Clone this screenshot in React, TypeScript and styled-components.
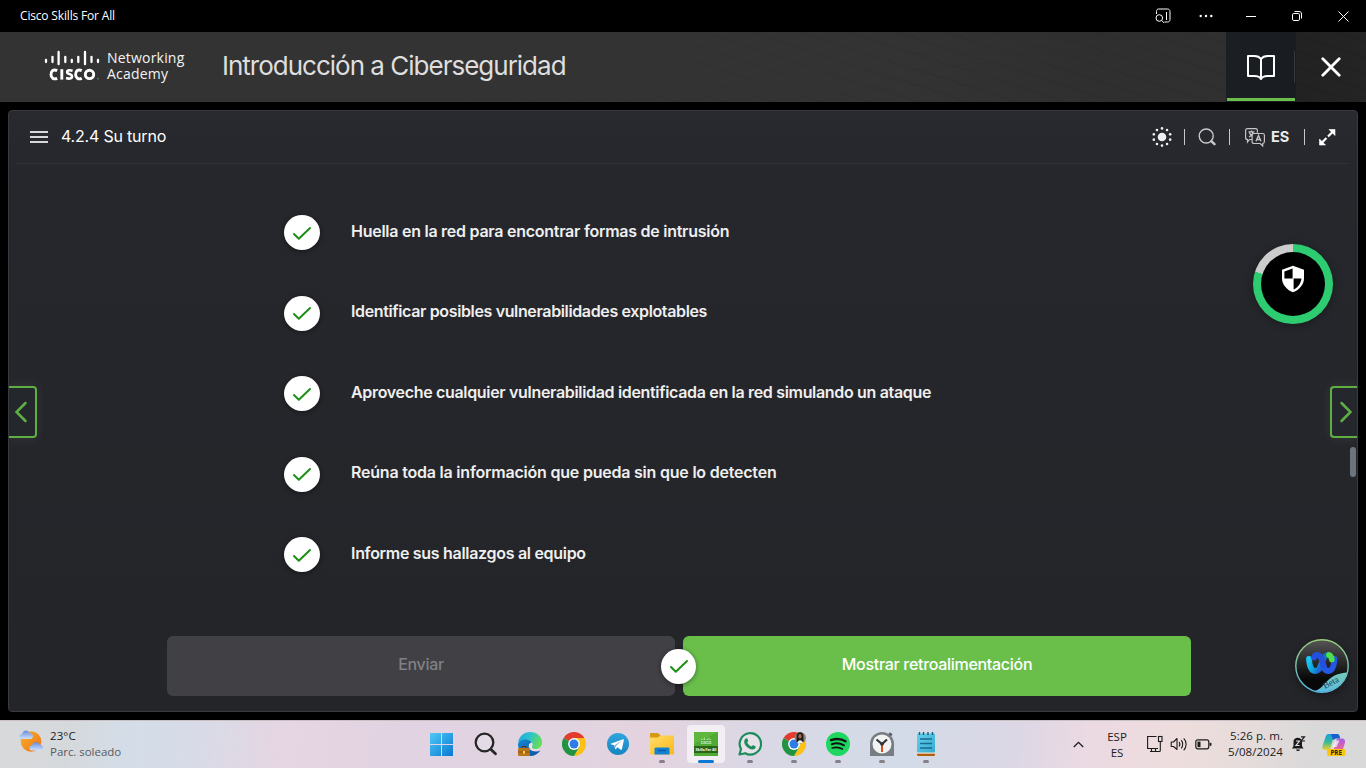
import React from "react";
import styled, { createGlobalStyle } from "styled-components";

const UI = `Inter, "Liberation Sans", sans-serif`;
const SYS = `"Open Sans", "Noto Sans", sans-serif`;

const Global = createGlobalStyle`
  * { box-sizing: border-box; }
  body { margin: 0; background: #000; overflow: hidden; }
  svg { display: block; flex: none; }
  button { font: inherit; color: inherit; background: none; border: 0; padding: 0; margin: 0; }
`;

const Screen = styled.div`
  width: 1366px;
  height: 768px;
  display: flex;
  flex-direction: column;
  background: #000;
  font-family: ${UI};
  overflow: hidden;
`;

const TitleBar = styled.div`
  height: 32px;
  flex: none;
  display: flex;
  align-items: center;
  padding-left: 20px;
  color: #fff;
  font: 12px/16px ${SYS};
`;
const WindowTitle = styled.span`
  flex: 1;
  letter-spacing: -0.17px;
`;
const WindowControls = styled.div`
  display: flex;
  height: 32px;
`;
const WindowControl = styled.button<{ $w: number }>`
  width: ${(p) => p.$w}px;
  display: flex;
  align-items: center;
  justify-content: center;
`;

const Header = styled.header`
  height: 70px;
  flex: none;
  display: flex;
  align-items: stretch;
  background:
    linear-gradient(90deg, #333 0, #333 420px, transparent 1000px),
    repeating-linear-gradient(18deg, transparent 0 13px, rgba(0, 0, 0, 0.05) 13px 15px),
    linear-gradient(90deg, #333 0, #333 900px, #2f2f2f 1100px, #303030 1226px, #222 1300px, #242424 1366px);
`;
const Brand = styled.div`
  width: 222px;
  display: flex;
  align-items: flex-start;
  padding: 18px 0 0 44px;
  color: #f4f4f4;
`;
const BrandName = styled.div`
  margin-left: 7px;
  font: 14px/16px "Open Sans", sans-serif;
  letter-spacing: 0.2px;
`;
const CourseTitle = styled.h1`
  flex: 1;
  margin: 0;
  font-size: 26px;
  line-height: 68px;
  font-weight: 400;
  letter-spacing: -1px;
  color: #dedede;
`;
const BookTab = styled.button`
  width: 70px;
  display: flex;
  align-items: center;
  justify-content: center;
  padding-top: 1px;
  background:
    linear-gradient(#35383c, #35383c) 68px 19px / 1px 32px no-repeat,
    linear-gradient(#6abf4b, #6abf4b) 1px 66px / 68px 3px no-repeat,
    linear-gradient(90deg, #1b1e23, #191c20);
`;
const CloseTab = styled.button`
  width: 70px;
  display: flex;
  align-items: center;
  justify-content: center;
`;

const Stage = styled.main`
  flex: 1;
  padding: 8px;
  display: flex;
`;
const Panel = styled.section`
  position: relative;
  flex: 1;
  display: flex;
  flex-direction: column;
  background: linear-gradient(180deg, #282a2f 0, #26272c 60px, #242529 100%);
  border: 1px solid #393a40;
  border-radius: 4px;
  overflow: hidden;
`;
const Toolbar = styled.div`
  height: 53px;
  flex: none;
  display: flex;
  align-items: center;
  margin: 0 8px 0 6px;
  padding: 0 12px 0 15px;
  border-bottom: 1px solid #313338;
  color: #fff;
`;
const Topic = styled.span`
  flex: 1;
  margin: -2px 0 0 13px;
  font-size: 16px;
  line-height: 20px;
  letter-spacing: -0.2px;
`;
const Tools = styled.div`
  display: flex;
  align-items: center;
`;
const Divider = styled.i<{ $l: number; $r: number }>`
  width: 1px;
  height: 16px;
  background: #c8c8ca;
  margin: 0 ${(p) => p.$r}px 0 ${(p) => p.$l}px;
`;
const Lang = styled.b`
  font-size: 14.5px;
  line-height: 18px;
  font-weight: 700;
  margin: 0 0 0 6px;
  width: 19px;
  color: #ececec;
`;

const Content = styled.div`
  flex: 1;
  padding: 28.4px 0 0 158px;
`;
const List = styled.ul`
  list-style: none;
  margin: 0;
  padding: 0 0 0 117px;
`;
const Item = styled.li`
  height: 80.5px;
  display: flex;
  align-items: center;
  color: #efefef;
`;
const Disc = styled.span<{ $w: number }>`
  width: ${(p) => p.$w}px;
  height: 35px;
  flex: none;
  border-radius: 50%;
  background: #fff;
  display: flex;
  align-items: center;
  justify-content: center;
  box-shadow: 0 1px 5px rgba(0, 0, 0, 0.45);
`;
const ItemText = styled.span<{ $ls: number }>`
  margin: -3.8px 0 0 31px;
  font-size: 16px;
  line-height: 24px;
  font-weight: 600;
  letter-spacing: ${(p) => p.$ls}px;
  white-space: nowrap;
`;
const Actions = styled.div`
  position: relative;
  display: flex;
  gap: 8px;
  margin-top: 41.1px;
`;
const Action = styled.button<{ $primary?: boolean }>`
  width: 508px;
  height: 60px;
  padding-bottom: 3px;
  border-radius: 6px;
  background: ${(p) => (p.$primary ? "#6abf4b" : "#414145")};
  color: ${(p) => (p.$primary ? "#fff" : "#7f8083")};
  font-size: 16px;
  font-weight: 500;
  letter-spacing: -0.3px;
`;
const ActionBadge = styled.div`
  position: absolute;
  left: 494px;
  top: 13px;
`;

const SideNav = styled.button<{ $side: "left" | "right" }>`
  position: absolute;
  top: 275px;
  ${(p) => p.$side}: ${(p) => (p.$side === "left" ? -1 : -2)}px;
  width: 29px;
  height: 52px;
  display: flex;
  align-items: center;
  justify-content: center;
  ${(p) => (p.$side === "left" ? "padding-right: 1px;" : "padding-left: 1px;")}
  background: #24282d;
  border: 2px solid #5fae43;
  border-${(p) => p.$side}: 0;
  border-radius: ${(p) => (p.$side === "left" ? "0 4px 4px 0" : "4px 0 0 4px")};
  box-shadow: 0 0 12px rgba(255, 255, 255, 0.08);
`;
const ScrollThumb = styled.div`
  position: absolute;
  right: 1px;
  top: 336px;
  width: 6px;
  height: 30px;
  border-radius: 3px;
  background: #6c757e;
`;
const ProgressDial = styled.div`
  position: absolute;
  right: 24px;
  top: 133px;
  width: 80px;
  height: 80px;
  border-radius: 50%;
  padding: 8px;
  background: conic-gradient(#2ecc71 0 80%, #ccc 80% 100%);
  box-shadow: 0 2px 8px rgba(0, 0, 0, 0.3);
`;
const DialFace = styled.div`
  height: 64px;
  border-radius: 50%;
  background: #000;
  display: flex;
  justify-content: center;
  padding-top: 13px;
`;
const Assistant = styled.div`
  position: absolute;
  right: 8px;
  bottom: 18px;
  border-radius: 50%;
  box-shadow: 0 3px 8px rgba(0, 0, 0, 0.35);
`;

const Taskbar = styled.footer`
  height: 48px;
  flex: none;
  display: flex;
  border-top: 1px solid #c9c0c6;
  font-family: ${SYS};
  background: linear-gradient(97deg, #d8d9da 0, #d6d9dc 70px, #d3dde8 130px, #d8dbe7 200px, #e6d5e2 285px, #e2d3e2 400px, #e0d4e0 560px, #e4d3df 640px, #dad8e5 760px, #d3dbe8 900px, #dcd7e5 1010px, #ebd9e3 1080px, #eedddd 1170px, #e6dcdb 1240px, #d9d9d9 1310px, #d9d9d9 100%);
`;
const Weather = styled.div`
  width: 420px;
  display: flex;
  padding: 7px 0 0 18px;
`;
const WeatherText = styled.div`
  margin-left: 6px;
  font-size: 11.5px;
  line-height: 16px;
  letter-spacing: 0.1px;
  color: #1b1b1b;
`;
const Muted = styled.div`
  color: #595a5d;
  letter-spacing: -0.04px;
`;
const Apps = styled.div`
  flex: 1;
  display: flex;
`;
const AppSlot = styled.div<{ $active?: boolean; $running?: boolean }>`
  width: 38px;
  height: 38px;
  margin: 4px 3px 0;
  border-radius: 4px;
  display: flex;
  flex-direction: column;
  align-items: center;
  padding-top: 7px;
  background: ${(p) => (p.$active ? "rgba(255,255,255,.6)" : "none")};
  &::after {
    content: "";
    display: ${(p) => (p.$running ? "block" : "none")};
    width: ${(p) => (p.$active ? 16 : 6)}px;
    height: 3px;
    margin-top: 4px;
    border-radius: 2px;
    background: ${(p) => (p.$active ? "#0a78d4" : "#858088")};
  }
`;
const Tray = styled.div`
  display: flex;
  width: 300px;
  padding-top: 7px;
  color: #1b1b1b;
  font-size: 11.5px;
  line-height: 16px;
`;
const TrayIcon = styled.div<{ $ml: number; $mt: number }>`
  margin: ${(p) => p.$mt}px 0 0 ${(p) => p.$ml}px;
`;
const Keyboard = styled.div`
  width: 30px;
  margin-left: 18px;
  margin-right: -1px;
  margin-top: 1px;
  text-align: center;
`;
const Clock = styled.div`
  width: 66px;
  margin-left: 5px;
  text-align: right;
  white-space: nowrap;
  letter-spacing: 0.05px;
`;

const Check = () => (
  <svg width="20" height="16" viewBox="0 0 20 16" fill="none" stroke="#1d9016" strokeWidth="2" strokeLinecap="round" strokeLinejoin="round">
    <path d="M2 9 6.800 13.800 18 3" />
  </svg>
);

const CiscoLogo = () => (
  <svg width="56" height="33" viewBox="0 0 56 33">
    <g stroke="#fff" strokeWidth="2.3" strokeLinecap="round">
      <path d="M2 9.8V12M8.5 6.8V12M14.6 2V14.2M21.3 6.8V12M27.8 9.8V12M34.3 6.8V12M41 2V14.2M47.5 6.8V12M54 9.8V12" />
    </g>
    <g fill="none" stroke="#fff" strokeWidth="2.9">
      <path d="M13.2 20.6C9.5 18.8 7 21 7 24.4S9.6 29.9 13.2 28.3" />
      <path d="M17.8 19.2V29.6" />
      <path d="M28.6 20.7C25.2 19.8 23.1 20.3 23.1 21.9 23.1 24.7 28 23.3 28 26.5 28 28.8 25 29 22 28.1" strokeWidth="2.6" />
      <path d="M37.8 20.6C34.1 18.8 31.6 21 31.6 24.4S34.2 29.9 37.8 28.3" />
      <circle cx="45.5" cy="24.4" r="4.2" />
    </g>
    <circle cx="54" cy="28.8" r=".7" fill="#999" />
  </svg>
);

const Chevron = ({ dir }: { dir: "left" | "right" }) => (
  <svg width="14" height="22" viewBox="0 0 14 22" fill="none" stroke="#5fae43" strokeWidth="2.5" strokeLinecap="round">
    <path d={dir === "left" ? "M11.5 2 2.5 11l9 9" : "M2.5 2l9 9-9 9"} />
  </svg>
);

const ShieldIcon = () => (
  <svg width="24" height="28" viewBox="0 0 24 28">
    <path d="M12 .8 1 4.8v8.4c0 6 4.4 11.6 11 14 6.6-2.4 11-8 11-14V4.8z" fill="#fff" />
    <path d="M11.6 3.5 3.4 6.4v7h8.2zM12.6 13.4V24.5c4.3-2 7.3-6.2 7.9-11.1z" fill="#000" />
  </svg>
);

const AssistantIcon = () => (
  <svg width="54" height="54" viewBox="0 0 54 54">
    <defs>
      <linearGradient id="as-bg" x1="0" y1="0" x2="0" y2="1"><stop stopColor="#555" /><stop offset=".75" stopColor="#080808" /></linearGradient>
      <linearGradient id="as-ring" x1="0" y1="0" x2="0" y2="1"><stop stopColor="#9bd07c" /><stop offset="1" stopColor="#55b9e4" /></linearGradient>
      <linearGradient id="as-rib" x1="1" y1="0" x2="0" y2="1"><stop stopColor="#76ccb4" /><stop offset="1" stopColor="#57b8e6" /></linearGradient>
      <linearGradient id="as-l" x1="0" y1="0" x2="1" y2=".4"><stop stopColor="#19c8f4" /><stop offset=".5" stopColor="#0fa5d8" /><stop offset="1" stopColor="#2060d8" /></linearGradient>
      <clipPath id="as-clip"><circle cx="27" cy="27" r="26" /></clipPath>
    </defs>
    <circle cx="27" cy="27" r="26" fill="url(#as-bg)" />
    <g fill="none" strokeLinecap="round" strokeWidth="5.8">
      <path d="M39.5 20C39 27 37 32 33 32S28.500 27 27 21.500" stroke="#2457e6" />
      <path d="M14 20C14.500 27.500 16.500 32 20.500 32S25.500 27.500 27.500 21.500" stroke="url(#as-l)" />
      <path d="M27.500 21.500C29 17 31 15.800 33.500 15.800" stroke="#1672b4" />
      <path d="M34 16C36 16.500 36.500 18.500 36.800 20.500" stroke="#4be04a" />
      <path d="M19 18.500C20 15 24.500 14.500 26.500 20L28.500 26.500" stroke="#2450dd" />
    </g>
    <path d="M20 52C31 49 31 34 54 33.500V54H20z" fill="url(#as-rib)" clipPath="url(#as-clip)" />
    <circle cx="27" cy="27" r="26.2" fill="none" stroke="url(#as-ring)" strokeWidth="1.4" />
    <text x="30" y="50" transform="rotate(-28 30 50)" fontFamily="Liberation Serif, serif" fontSize="9" fill="#1c4258">Beta</text>
  </svg>
);

const WeatherIcon = () => (
  <svg width="26" height="26" viewBox="0 0 26 26">
    <defs>
      <linearGradient id="sun" x1="0" y1="0" x2="1" y2="1"><stop stopColor="#f7b22b" /><stop offset="1" stopColor="#ef7216" /></linearGradient>
      <linearGradient id="cl" x1="0" y1="0" x2="0" y2="1"><stop stopColor="#6288e0" /><stop offset="1" stopColor="#cfe1f9" /></linearGradient>
    </defs>
    <circle cx="13" cy="13.5" r="10.3" fill="url(#sun)" />
    <path d="M4 11C.5 11 .5 6.500 4 6.200 5 1.200 10.500 1.500 11.300 5 16 5 16 11 12.500 11z" fill="url(#cl)" />
    <path d="M14 22.500C10.500 22.500 10.500 17.800 14 17.500 15 12.700 20.500 13 21.300 16.500 26 16.500 26 22.500 22.500 22.500z" fill="url(#cl)" />
  </svg>
);

const WindowsIcon = () => (
  <svg width="24" height="24" viewBox="0 0 24 24">
    <defs><linearGradient id="win" x1="0" y1="0" x2="1" y2="1"><stop stopColor="#4fc9f8" /><stop offset="1" stopColor="#0a78d2" /></linearGradient></defs>
    <path d="M0 1h11v11H0zM12 1h11v11H12zM0 13h11v11H0zM12 13h11v11H12z" fill="url(#win)" />
  </svg>
);
const SearchAppIcon = () => (
  <svg width="24" height="24" viewBox="0 0 24 24">
    <circle cx="10.5" cy="10.5" r="8.8" fill="#e3dce6" stroke="#262626" strokeWidth="2.3" />
    <path d="m17 17.5 4.5 4.3" stroke="#262626" strokeWidth="2.8" strokeLinecap="round" />
  </svg>
);
const EdgeIcon = () => (
  <svg width="24" height="24" viewBox="0 0 24 24">
    <defs>
      <linearGradient id="ed1" x1="0" y1="0" x2="1" y2=".4"><stop stopColor="#1ba4e2" /><stop offset=".5" stopColor="#2cc3cd" /><stop offset="1" stopColor="#63dc5d" /></linearGradient>
      <linearGradient id="ed2" x1="0" y1="0" x2="1" y2="1"><stop stopColor="#1389d6" /><stop offset="1" stopColor="#0d4f9e" /></linearGradient>
    </defs>
    <path d="M0 11C1 4 6 0 12 0c7 0 12 4.500 12 10.500 0 4-3 6.500-6.500 6.500-3 0-4-1.200-3.500-2.500C16 11 13 8 9 8S1.500 9 0 11z" fill="url(#ed1)" />
    <path d="M0 12C1 8.500 5 7 8.500 7.500c3 .3 5 2 5.300 3.500-3 .5-3.800 3.500-1.800 6 2.500 3 7 3 10.500 1.500C20 22 16.500 24 12 24 5 24 0 19 0 12z" fill="url(#ed2)" />
    <path d="M13.500 10.500c-3 1-3.500 4-1.500 6.500 2 2 6 2.500 9 .3-3 .7-8 .2-7-2.800.6-1.500.5-3-.5-4z" fill="#e9e0ec" />
    <rect x="0" y="16" width="12" height="8" rx="1" fill="#b9761a" /><path d="M4 16v-1.500h4V16" stroke="#613606" fill="none" /><path d="M0 20h12" stroke="#845010" /><rect x="5" y="19" width="2" height="2.5" fill="#ffd04c" />
  </svg>
);
const ChromeIcon = ({ profile }: { profile?: boolean }) => (
  <svg width="24" height="24" viewBox="0 0 24 24">
    <path d="M12 12 1.600 6A12 12 0 0 1 22.400 6z" fill="#e33b2e" />
    <path d="M12 12V24A12 12 0 0 1 1.600 6z" fill="#229342" />
    <path d="M12 6h10.400A12 12 0 0 1 12 24l5.200-9z" fill="#fbc116" />
    <path d="M12 24l5.200-9H8z" fill="#229342" />
    <circle cx="12" cy="12" r="5.9" fill="#fff" /><circle cx="12" cy="12" r="4.5" fill="#2e7bea" />
    {profile && (
      <g>
        <circle cx="18.3" cy="5.8" r="5.7" fill="#8f8781" />
        <path d="M14.500 10V4c0-5 7-5 7 0v6z" fill="#241a18" />
        <ellipse cx="18" cy="4.3" rx="1.6" ry="2.2" fill="#9c6b55" />
        <path d="M15.500 11.300c0-4 5-4 5.300-.4z" fill="#eee" />
      </g>
    )}
  </svg>
);
const TelegramIcon = () => (
  <svg width="24" height="24" viewBox="0 0 24 24">
    <defs><linearGradient id="tg" x1="0" y1="0" x2="0" y2="1"><stop stopColor="#32a5de" /><stop offset="1" stopColor="#1586bf" /></linearGradient></defs>
    <circle cx="12" cy="12" r="11" fill="url(#tg)" />
    <path d="M4.800 11.800 17 7.200c.7-.2 1 .1.900.8l-2 9.200c-.2.7-.7.8-1.200.5L11.500 15.300 9.900 17c-.6.5-.8.200-.9-.4l-.8-3.300-3.300-1c-.5-.2-.5-.4-.1-.5z" fill="#fff" />
    <path d="m8.500 13.300 6.800-4.600-5.300 5.300-.4 2.600z" fill="#7fb9dc" />
  </svg>
);
const FolderIcon = () => (
  <svg width="24" height="24" viewBox="0 0 24 24">
    <defs><linearGradient id="fo" x1="0" y1="0" x2="1" y2="1"><stop stopColor="#ffdc6b" /><stop offset="1" stopColor="#fab918" /></linearGradient></defs>
    <path d="M0 2c0-.7.500-1 1-1h7l2.500 2.500V8H0z" fill="#d49a10" />
    <path d="M0 5.500h8L10.500 3.500H23.500c.3 0 .5.200.5.500V21.500c0 .6-.4 1-1 1H1c-.6 0-1-.4-1-1z" fill="url(#fo)" />
    <path d="M4.500 22.500v-5.500c0-1 .5-1.500 1.500-1.500h12c1 0 1.500.5 1.500 1.500v5.500z" fill="#1482d2" /><path d="M8 18.500h8" stroke="#0a5ba8" strokeWidth="1.5" />
  </svg>
);
const SkillsIcon = () => (
  <svg width="24" height="24" viewBox="0 0 24 24">
    <rect width="24" height="24" fill="#50a933" /><path d="M0 0h24L0 12z" fill="#5fb83d" />
    <path d="M7.500 7v1M9 6.500V8M10.500 5.500V8M12 7v1M13.500 6.500V8M15 5.500V8M16.500 7v1" stroke="#cfeec3" strokeWidth=".7" />
    <text x="12" y="12" textAnchor="middle" fontFamily="Inter, sans-serif" fontWeight="700" fontSize="3.3" fill="#dff2d7">CISCO</text>
    <rect y="14" width="24" height="7" fill="#276716" />
    <text x="12" y="18.8" textAnchor="middle" fontFamily="Inter, sans-serif" fontWeight="700" fontSize="3.5" fill="#fff">Skills For All</text>
  </svg>
);
const WhatsIcon = () => (
  <svg width="24" height="24" viewBox="0 0 24 24">
    <path d="M1.500 22.500 3 17A10.700 10.700 0 1 1 7.200 21.200z" fill="#e7e1ea" stroke="#1d8c5b" strokeWidth="2.2" strokeLinejoin="round" />
    <path d="M8.200 6.300c.6-.2 1 0 1.200.5l.8 1.900c.1.400 0 .7-1 1.700.9 1.900 2.300 3.200 4.400 4.100 1-1.200 1.200-1.500 1.700-1.300l2 1c.5.200.6.500.4 1.100-.5 1.600-2 2.400-3.500 2.200-4.200-.7-7.500-4-8-7.300-.1-1.700.8-3.300 2-3.900z" fill="#1d8c5b" />
  </svg>
);
const SpotifyIcon = () => (
  <svg width="24" height="24" viewBox="0 0 24 24">
    <circle cx="12" cy="12" r="12" fill="#1ed760" />
    <g fill="none" stroke="#10140f" strokeLinecap="round"><path d="M5 8.200C10 6.500 16 7 19.500 9.300" strokeWidth="2.3" /><path d="M5.800 12.200C10 10.800 14.500 11.300 18 13.300" strokeWidth="2" /><path d="M6.300 16C10 14.900 13.500 15.300 16.500 17" strokeWidth="1.6" /></g>
  </svg>
);
const ClockIcon = () => (
  <svg width="24" height="24" viewBox="0 0 24 24">
    <path d="M18 2.500 20 .3l2.500 2L21 4.500z" fill="#575c60" /><path d="M0 24V12a12 12 0 0 1 24 0v12z" fill="#777d83" />
    <circle cx="12" cy="12" r="9.5" fill="#f3f3f3" /><path d="M6.500 7.500 12 12l5-4.500" stroke="#303438" strokeWidth="2.2" fill="none" /><path d="M12 12v8" stroke="#d8511c" strokeWidth="2" /><circle cx="12" cy="12" r="1.8" fill="#303438" />
  </svg>
);
const NotepadIcon = () => (
  <svg width="24" height="24" viewBox="0 0 24 24">
    <defs><linearGradient id="np" x1="0" y1="0" x2="1" y2="1"><stop stopColor="#65d1ea" /><stop offset="1" stopColor="#37abd0" /></linearGradient></defs>
    <path d="M3 21h18v1.500c0 .8-.5 1.500-1.500 1.500h-15C3.500 24 3 23.300 3 22.500z" fill="#b65a0c" /><rect x="3" y="20" width="18" height="1.7" fill="#eee6d8" />
    <rect x="3" y="1.5" width="18" height="19" rx="1" fill="url(#np)" />
    <path d="M5.500 0v3M9.500 0v3M14 0v3M18.500 0v3" stroke="#175a80" strokeWidth="1.4" /><path d="M6 7h12M6 11.500h12M6 16h12" stroke="#1a6a93" strokeWidth="1.5" />
  </svg>
);

const TASKS: { icon: React.ReactNode; running?: boolean; active?: boolean }[] = [
  { icon: <WindowsIcon /> },
  { icon: <SearchAppIcon /> },
  { icon: <EdgeIcon /> },
  { icon: <ChromeIcon /> },
  { icon: <TelegramIcon /> },
  { icon: <FolderIcon />, running: true },
  { icon: <SkillsIcon />, running: true, active: true },
  { icon: <WhatsIcon />, running: true },
  { icon: <ChromeIcon profile />, running: true },
  { icon: <SpotifyIcon />, running: true },
  { icon: <ClockIcon />, running: true },
  { icon: <NotepadIcon />, running: true },
];

const STEPS = [
  { text: "Huella en la red para encontrar formas de intrusión", ls: -0.26 },
  { text: "Identificar posibles vulnerabilidades explotables", ls: -0.36 },
  { text: "Aproveche cualquier vulnerabilidad identificada en la red simulando un ataque", ls: -0.325 },
  { text: "Reúna toda la información que pueda sin que lo detecten", ls: -0.215 },
  { text: "Informe sus hallazgos al equipo", ls: -0.3 },
];

const SunIcon = () => (
  <svg width="20" height="20" viewBox="0 0 20 20" fill="#efefef">
    <circle cx="10" cy="10" r="4.3" />
    {Array.from({ length: 10 }, (_, i) => {
      const a = (i * Math.PI) / 5 - Math.PI / 2;
      return <circle key={i} cx={10 + 8.6 * Math.cos(a)} cy={10 + 8.6 * Math.sin(a)} r="1.3" />;
    })}
  </svg>
);

export default function App() {
  return (
    <Screen>
      <Global />
      <TitleBar>
        <WindowTitle>Cisco Skills For All</WindowTitle>
        <WindowControls>
          <WindowControl $w={40}>
            <svg width="16" height="16" viewBox="0 0 16 16" fill="none" stroke="#fff">
              <path d="M1.500 6V3.500c0-1.500.8-2.500 2-2.500h9c1.500 0 2.500 1 2.500 2.500v8c0 1.500-1 2.500-2.500 2.500H9.500M11.500 4v8" /><circle cx="4.3" cy="10" r="3.3" /><path d="m6.700 12.500 2.500 2.500" />
            </svg>
          </WindowControl>
          <WindowControl $w={45}>
            <svg width="14" height="4" viewBox="0 0 14 4" fill="#fff"><circle cx="1.7" cy="2" r="1.2" /><circle cx="7" cy="2" r="1.2" /><circle cx="12.3" cy="2" r="1.2" /></svg>
          </WindowControl>
          <WindowControl $w={45}><svg width="10" height="10"><path d="M0 5.500h10" stroke="#fff" /></svg></WindowControl>
          <WindowControl $w={47}>
            <svg width="10" height="10" viewBox="0 0 10 10" fill="none" stroke="#fff"><rect x=".5" y="2.5" width="7" height="7" rx="1.3" /><path d="M2.500.5H7C8.700.5 9.500 1.300 9.500 3v4.500" /></svg>
          </WindowControl>
          <WindowControl $w={46}><svg width="11" height="11" viewBox="0 0 11 11" stroke="#fff"><path d="m.5.5 10 10M10.500.5l-10 10" /></svg></WindowControl>
        </WindowControls>
      </TitleBar>

      <Header>
        <Brand>
          <CiscoLogo />
          <BrandName>Networking<br />Academy</BrandName>
        </Brand>
        <CourseTitle>Introducción a Ciberseguridad</CourseTitle>
        <BookTab>
          <svg width="30" height="28" viewBox="0 0 30 28" fill="none" stroke="#fff" strokeWidth="2">
            <path d="M15 5C13.500 3 11.500 2 8.500 2H2v20h6.500c3.500 0 5.500 1 6.500 3 1-2 3-3 6.500-3H28V2h-6.500c-3 0-5 1-6.500 3zM15 5v20.500" strokeLinejoin="round" />
          </svg>
        </BookTab>
        <CloseTab>
          <svg width="20" height="20" viewBox="0 0 20 20" stroke="#fff" strokeWidth="2.8" strokeLinecap="round"><path d="m1.800 1.800 16.400 16.400M18.200 1.800 1.800 18.200" /></svg>
        </CloseTab>
      </Header>

      <Stage>
        <Panel>
          <Toolbar>
            <svg width="18" height="12" viewBox="0 0 18 12" stroke="#d8d8da" strokeWidth="2"><path d="M0 1h18M0 6h18M0 11h18" /></svg>
            <Topic>4.2.4 Su turno</Topic>
            <Tools>
              <SunIcon />
              <Divider $l={12} $r={13} />
              <svg width="18" height="18" viewBox="0 0 18 18" fill="none" stroke="#c9c9cb"><circle cx="8.2" cy="8" r="7" strokeWidth="1.4" /><path d="m13.300 13.200 3.200 3" strokeWidth="2.4" strokeLinecap="round" /></svg>
              <Divider $l={13} $r={15} />
              <svg width="20" height="19" viewBox="0 0 20 19" fill="none" stroke="#c4c4c6" strokeWidth="1.2">
                <path d="M7 11.500H4.500L2.500 14v-2.500C1 11.500.6 11 .6 9.500V2.500C.6 1.200 1.200.7 2.500.7h8c1.300 0 1.900.5 1.900 1.800v2.300" />
                <path d="M9 5.500h8.500c1.300 0 1.900.6 1.900 1.800v6.200c0 1.300-.4 1.900-1.700 2V18l-2.500-2.500H9c-1.300 0-1.900-.6-1.900-1.900V7.300c0-1.200.6-1.800 1.900-1.800z" />
                <path d="M3.500 3.800h6M6.500 2.500v1.300M4 9C6 8 7.600 6.300 8 4M4.500 4.500C5 6.200 5.800 7.300 7 8.300M11 13.300l2.500-5.800 2.500 5.800M11.800 11.500h3.400" strokeWidth="1.3" />
              </svg>
              <Lang>ES</Lang>
              <Divider $l={14} $r={13} />
              <svg width="19" height="19" viewBox="0 0 19 19" fill="#fff" stroke="#fff"><path d="m4 14.500 4.500-4.500M10 8.500 14.500 4" strokeWidth="2.2" /><path d="M17 1.500v6l-6-6zM1.500 17v-6l6 6z" strokeWidth=".6" /></svg>
            </Tools>
          </Toolbar>

          <Content>
            <List>
              {STEPS.map((s) => (
                <Item key={s.text}>
                  <Disc $w={36}><Check /></Disc>
                  <ItemText $ls={s.ls}>{s.text}</ItemText>
                </Item>
              ))}
            </List>
            <Actions>
              <Action>Enviar</Action>
              <Action $primary>Mostrar retroalimentación</Action>
              <ActionBadge><Disc $w={35}><Check /></Disc></ActionBadge>
            </Actions>
          </Content>

          <SideNav $side="left"><Chevron dir="left" /></SideNav>
          <SideNav $side="right"><Chevron dir="right" /></SideNav>
          <ScrollThumb />
          <ProgressDial><DialFace><ShieldIcon /></DialFace></ProgressDial>
          <Assistant><AssistantIcon /></Assistant>
        </Panel>
      </Stage>

      <Taskbar>
        <Weather>
          <WeatherIcon />
          <WeatherText>23°C<Muted>Parc. soleado</Muted></WeatherText>
        </Weather>
        <Apps>
          {TASKS.map((t, i) => (
            <AppSlot key={i} $active={t.active} $running={t.running}>{t.icon}</AppSlot>
          ))}
        </Apps>
        <Tray>
          <TrayIcon $ml={7} $mt={13}>
            <svg width="11" height="7" viewBox="0 0 11 7" fill="none" stroke="#1b1b1b" strokeWidth="1.3"><path d="m.8 6 4.700-4.700L10.200 6" /></svg>
          </TrayIcon>
          <Keyboard>ESP<br />ES</Keyboard>
          <TrayIcon $ml={15} $mt={7}>
            <svg width="17" height="18" viewBox="0 0 17 18" fill="none" stroke="#1b1b1b" strokeWidth="1.1"><path d="M10.500 1.500H1.600v12h10.400M5.500 13.500v3M9.500 13.500v3M4 16.500h9.500c.6 0 .8-.4.8-1V6.500" /><rect x="12.5" y="1.5" width="3.5" height="5" /></svg>
          </TrayIcon>
          <TrayIcon $ml={7} $mt={8}>
            <svg width="18" height="16" viewBox="0 0 18 16" fill="none" stroke="#1b1b1b" strokeWidth="1.1" strokeLinejoin="round"><path d="M1.200 6v4.500h2.300L7 13.500v-11L3.500 6zM9 6c1 1.200 1 3.200 0 4.500M11.200 4.200c2 2.200 2 6 0 8.200M13.700 2.300c3.200 3 3.200 9 0 12" /></svg>
          </TrayIcon>
          <TrayIcon $ml={7} $mt={11}>
            <svg width="17" height="11" viewBox="0 0 17 11" fill="none" stroke="#1b1b1b" strokeWidth="1.2"><rect x=".8" y=".8" width="13" height="9" rx="2" /><path d="M15.500 3.800v3" strokeWidth="1.8" /><rect x="2.5" y="2.6" width="3" height="5.5" fill="#1b1b1b" stroke="none" /></svg>
          </TrayIcon>
          <Clock>5:26 p. m.<br />5/08/2024</Clock>
          <TrayIcon $ml={8} $mt={8}>
            <svg width="15" height="16" viewBox="0 0 15 16"><path d="M1 12.500 2.500 10V5.500C2.500.5 11 .5 11 5.500V10l1.500 2.500zM5 13.500h4c-.5 2-3.500 2-4 0z" fill="#1b1b1b" /><path d="M5 5h3.500L5 9.500h3.500" stroke="#e8dedd" fill="none" strokeWidth="1.2" /><path d="M10 .8h3.500L10.200 5H14" stroke="#1b1b1b" fill="none" strokeWidth="1.2" /></svg>
          </TrayIcon>
          <TrayIcon $ml={16} $mt={5}>
            <svg width="25" height="24" viewBox="0 0 25 24">
              <defs>
                <linearGradient id="co1" x1="0" y1="0" x2="0" y2="1"><stop stopColor="#169fdf" /><stop offset=".5" stopColor="#37b99a" /><stop offset="1" stopColor="#f2cf27" /></linearGradient>
                <linearGradient id="co2" x1="0" y1="0" x2="0" y2="1"><stop stopColor="#a45fe8" /><stop offset="1" stopColor="#f0678f" /></linearGradient>
              </defs>
              <path d="M7 1h8c2 0 2.500 1.500 3 4h-4c-2 0-3 1-3.500 3L8.500 15c-.4 1.500-1.300 2-3 2H3c-2 0-3-1.500-2.500-4L3.500 4C4 2 5 1 7 1z" fill="url(#co1)" />
              <path d="M9 1h6c2 0 2.500 1.500 3 4.500h-4L11 7z" fill="#1a5fd0" />
              <path d="M16.500 5.500H20c2.500 0 3.500 2 3 4l-2.500 8H9c2 0 3-1 3.500-3l1.500-6c.4-2 1-3 2.500-3z" fill="url(#co2)" />
              <path d="M14 7.500h3.500L14.500 14h-4z" fill="#fff" opacity=".7" />
              <rect x="5" y="16" width="18.5" height="7" rx="2" fill="#fdc60b" /><text x="14.2" y="21.9" textAnchor="middle" fontFamily="Open Sans, sans-serif" fontWeight="700" fontSize="6.3" fill="#2a2208">PRE</text>
            </svg>
          </TrayIcon>
        </Tray>
      </Taskbar>
    </Screen>
  );
}
